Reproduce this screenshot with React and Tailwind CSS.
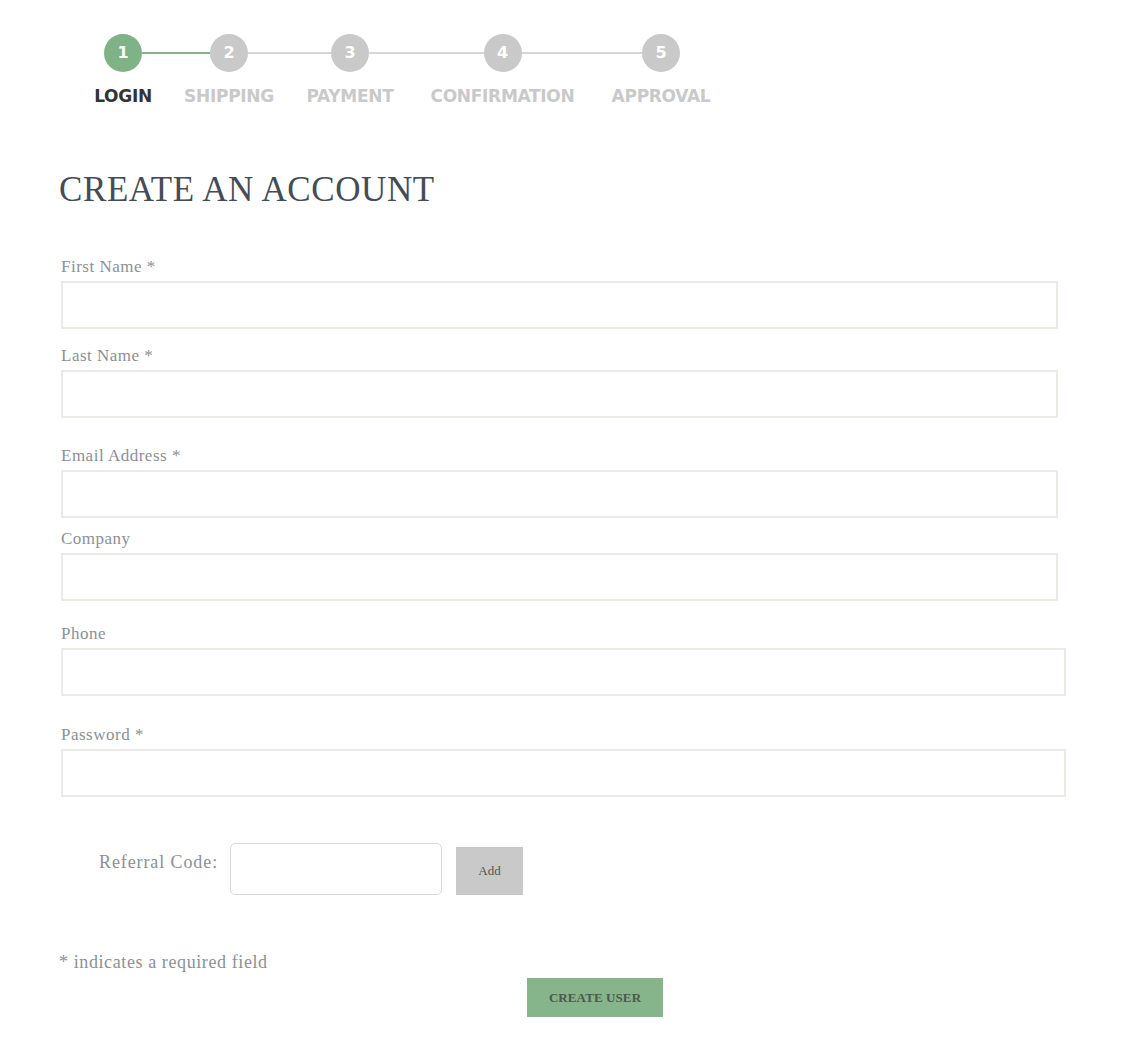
import React from "react";

const steps = [
  { n: 1, label: "LOGIN", w: "w-[94px]", active: true },
  { n: 2, label: "SHIPPING", w: "w-[118px]" },
  { n: 3, label: "PAYMENT", w: "w-[124px]" },
  { n: 4, label: "CONFIRMATION", w: "w-[181px]" },
  { n: 5, label: "APPROVAL", w: "w-[136px]" },
];

function Stepper() {
  return (
    <div className="flex pl-[76px] pt-[34px] font-['DejaVu_Sans',sans-serif]">
      {steps.map((s, i) => {
        const leftLine = i === 0 ? "" : i === 1 ? "bg-[#86b48b]" : "bg-[#d6d6d6]";
        const rightLine = i === steps.length - 1 ? "" : i === 0 ? "bg-[#86b48b]" : "bg-[#d6d6d6]";
        return (
          <div key={s.n} className={`${s.w} flex flex-col items-center`}>
            <div className="flex items-center w-full">
              <div className={`flex-1 h-[2px] ${leftLine}`} />
              <div
                className={`w-[38px] h-[38px] rounded-full flex items-center justify-center text-white text-[16px] font-bold ${
                  s.active ? "bg-[#80b288]" : "bg-[#c9c9c9]"
                }`}
              >
                {s.n}
              </div>
              <div className={`flex-1 h-[2px] ${rightLine}`} />
            </div>
            <div
              className={`mt-[14px] text-[17px] font-bold tracking-[-0.3px] leading-[20px] ${
                s.active ? "text-[#333333]" : "text-[#c9c9c9]"
              }`}
            >
              {s.label}
            </div>
          </div>
        );
      })}
    </div>
  );
}

function Field({ label, wide, className = "" }) {
  return (
    <div className={className}>
      <div className="text-[17px] leading-[20px] tracking-[0.5px] text-[#8b9094] mb-[4px]">{label}</div>
      <input
        className={`${wide ? "w-[1005px]" : "w-[997px]"} h-[48px] border-2 border-[#ebebe6] bg-white outline-none`}
      />
    </div>
  );
}

export default function App() {
  return (
    <div className="min-h-screen bg-white font-['Liberation_Serif',serif]">
      <Stepper />
      <div className="pl-[61px]">
        <h1 className="mt-[64px] text-[35px] leading-[40px] text-[#454c54] -ml-[2px] tracking-[0.6px]">
          CREATE AN ACCOUNT
        </h1>
        <Field label="First Name *" className="mt-[47px]" />
        <Field label="Last Name *" className="mt-[17px]" />
        <Field label="Email Address *" className="mt-[28px]" />
        <Field label="Company" className="mt-[11px]" />
        <Field label="Phone" wide className="mt-[23px]" />
        <Field label="Password *" wide className="mt-[29px]" />

        <div className="flex items-start mt-[46px] pl-[38px]">
          <div className="w-[119px] text-[18px] leading-[20px] text-[#8b9094] mt-[9px] tracking-[0.9px] whitespace-nowrap">
            Referral Code:
          </div>
          <input className="ml-[12px] w-[212px] h-[52px] border border-[#d9d9d9] rounded-[5px] outline-none" />
          <button className="ml-[14px] mt-[4px] w-[67px] h-[48px] bg-[#c9c9c9] text-[13px] text-[#555555]">
            Add
          </button>
        </div>

        <div className="mt-[57px] -ml-[2px] text-[18px] leading-[20px] tracking-[0.6px] text-[#8b9094]">
          * indicates a required field
        </div>
        <button className="ml-[466px] mt-[6px] w-[136px] h-[39px] bg-[#86b48b] text-[13px] font-bold text-[#4a5a4c] tracking-[0.1px]">
          CREATE USER
        </button>
      </div>
    </div>
  );
}
